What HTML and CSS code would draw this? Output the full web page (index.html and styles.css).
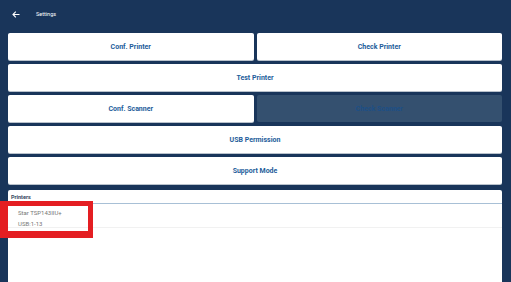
FILE: index.html
```html
<!DOCTYPE html>
<html lang="en">
<head>
  <meta charset="UTF-8">
  <meta name="viewport" content="width=device-width, initial-scale=1">
  <title>Settings</title>
  <link rel="stylesheet" href="styles.css">
</head>
<body>

  <div class="toolbar">
    <svg class="back" width="8" height="7" viewBox="0 0 8 7">
      <path d="M7.5 3.5H1M3.8 0.7L1 3.5l2.8 2.8" fill="none" stroke="#fff" stroke-width="1.1"/>
    </svg>
    <span class="title">Settings</span>
  </div>

  <div class="content">
    <div class="row">
      <button class="btn">Conf. Printer</button>
      <button class="btn">Check Printer</button>
    </div>
    <button class="btn">Test Printer</button>
    <div class="row">
      <button class="btn">Conf. Scanner</button>
      <button class="btn disabled">Check Scanner</button>
    </div>
    <button class="btn">USB Permission</button>
    <button class="btn">Support Mode</button>

    <div class="panel">
      <div class="panel-title">Printers</div>
      <div class="printer">
        <p>Star TSP143IIU+</p>
        <p>USB:1-13</p>
      </div>
      <div class="highlight"></div>
    </div>
  </div>

</body>
</html>
```

FILE: styles.css
```css
* {
  margin: 0;
  padding: 0;
  box-sizing: border-box;
  font-family: 'Roboto', 'Liberation Sans', sans-serif;
}

body {
  background: #19355a;
  height: 282px;
  overflow: hidden;
}

.toolbar {
  height: 28px;
  display: flex;
  align-items: center;
  padding-left: 12px;
  color: white;
}

.back {
  margin-right: 16px;
}

.title {
  font-size: 5.5px;
}

.content {
  padding: 5px 9px 0 8px;
  display: flex;
  flex-direction: column;
  gap: 4px;
}

.row {
  display: flex;
  gap: 3px;
}

.row .btn {
  flex: 1;
}

.btn {
  height: 27px;
  flex-shrink: 0;
  background: white;
  border: none;
  border-radius: 2px;
  box-shadow: 0 1px 0 #b9c2cc;
  color: #1d5c9a;
  font-size: 7px;
  font-weight: bold;
}

.btn.disabled {
  background: #34506f;
  box-shadow: none;
  color: #1d4f86;
}

.panel {
  position: relative;
  margin-top: 2px;
  height: 100px;
  flex-shrink: 0;
  background: white;
  border-radius: 2px 2px 0 0;
}

.panel-title {
  font-size: 5.5px;
  font-weight: bold;
  color: #33475e;
  padding: 4px 3px 0;
  height: 14px;
  border-bottom: 1px solid #a8c0d6;
}

.printer {
  padding: 3px 10px 0;
  height: 24px;
  border-bottom: 1px solid #f1f1f1;
  color: #777;
  font-size: 6px;
}

.printer p {
  line-height: 11px;
}

.highlight {
  position: absolute;
  left: -8px;
  top: 11px;
  width: 93px;
  height: 37px;
  border: solid #e41e22;
  border-width: 5px 5px 7px 8px;
}
```
